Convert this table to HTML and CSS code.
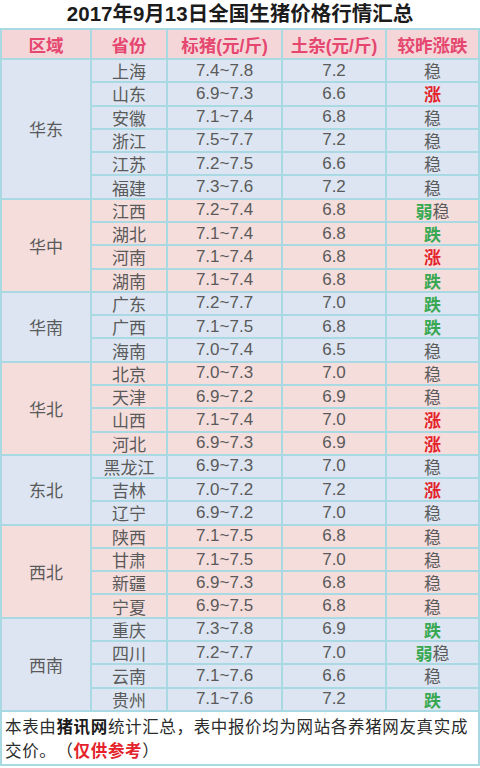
FILE: index.html
```html
<!DOCTYPE html>
<html lang="zh">
<head>
<meta charset="utf-8">
<link rel="stylesheet" href="styles.css">
</head>
<body>
<h1 class="title">2017年9月13日全国生猪价格行情汇总</h1>
<div class="sheet">
  <div class="h">区域</div><div class="h">省份</div><div class="h">标猪(元/斤)</div><div class="h">土杂(元/斤)</div><div class="h">较昨涨跌</div>

  <div class="grp blue">
    <div class="c region r6">华东</div>
    <div class="c">上海</div><div class="c">7.4~7.8</div><div class="c">7.2</div><div class="c">稳</div>
    <div class="c">山东</div><div class="c">6.9~7.3</div><div class="c">6.6</div><div class="c up">涨</div>
    <div class="c">安徽</div><div class="c">7.1~7.4</div><div class="c">6.8</div><div class="c">稳</div>
    <div class="c">浙江</div><div class="c">7.5~7.7</div><div class="c">7.2</div><div class="c">稳</div>
    <div class="c">江苏</div><div class="c">7.2~7.5</div><div class="c">6.6</div><div class="c">稳</div>
    <div class="c">福建</div><div class="c">7.3~7.6</div><div class="c">7.2</div><div class="c">稳</div>
  </div>

  <div class="grp pink">
    <div class="c region r4">华中</div>
    <div class="c">江西</div><div class="c">7.2~7.4</div><div class="c">6.8</div><div class="c"><span class="down">弱</span>稳</div>
    <div class="c">湖北</div><div class="c">7.1~7.4</div><div class="c">6.8</div><div class="c down">跌</div>
    <div class="c">河南</div><div class="c">7.1~7.4</div><div class="c">6.8</div><div class="c up">涨</div>
    <div class="c">湖南</div><div class="c">7.1~7.4</div><div class="c">6.8</div><div class="c down">跌</div>
  </div>

  <div class="grp blue">
    <div class="c region r3">华南</div>
    <div class="c">广东</div><div class="c">7.2~7.7</div><div class="c">7.0</div><div class="c down">跌</div>
    <div class="c">广西</div><div class="c">7.1~7.5</div><div class="c">6.8</div><div class="c down">跌</div>
    <div class="c">海南</div><div class="c">7.0~7.4</div><div class="c">6.5</div><div class="c">稳</div>
  </div>

  <div class="grp pink">
    <div class="c region r4">华北</div>
    <div class="c">北京</div><div class="c">7.0~7.3</div><div class="c">7.0</div><div class="c">稳</div>
    <div class="c">天津</div><div class="c">6.9~7.2</div><div class="c">6.9</div><div class="c">稳</div>
    <div class="c">山西</div><div class="c">7.1~7.4</div><div class="c">7.0</div><div class="c up">涨</div>
    <div class="c">河北</div><div class="c">6.9~7.3</div><div class="c">6.9</div><div class="c up">涨</div>
  </div>

  <div class="grp blue">
    <div class="c region r3">东北</div>
    <div class="c">黑龙江</div><div class="c">6.9~7.3</div><div class="c">7.0</div><div class="c">稳</div>
    <div class="c">吉林</div><div class="c">7.0~7.2</div><div class="c">7.2</div><div class="c up">涨</div>
    <div class="c">辽宁</div><div class="c">6.9~7.2</div><div class="c">7.0</div><div class="c">稳</div>
  </div>

  <div class="grp pink">
    <div class="c region r4">西北</div>
    <div class="c">陕西</div><div class="c">7.1~7.5</div><div class="c">6.8</div><div class="c">稳</div>
    <div class="c">甘肃</div><div class="c">7.1~7.5</div><div class="c">7.0</div><div class="c">稳</div>
    <div class="c">新疆</div><div class="c">6.9~7.3</div><div class="c">6.8</div><div class="c">稳</div>
    <div class="c">宁夏</div><div class="c">6.9~7.5</div><div class="c">6.8</div><div class="c">稳</div>
  </div>

  <div class="grp blue">
    <div class="c region r4">西南</div>
    <div class="c">重庆</div><div class="c">7.3~7.8</div><div class="c">6.9</div><div class="c down">跌</div>
    <div class="c">四川</div><div class="c">7.2~7.7</div><div class="c">7.0</div><div class="c"><span class="down">弱</span>稳</div>
    <div class="c">云南</div><div class="c">7.1~7.6</div><div class="c">6.6</div><div class="c">稳</div>
    <div class="c">贵州</div><div class="c">7.1~7.6</div><div class="c">7.2</div><div class="c down">跌</div>
  </div>

  <div class="foot">本表由<b>猪讯网</b>统计汇总，表中报价均为网站各养猪网友真实成<br>交价。（<b class="ref">仅供参考</b>）</div>
</div>
</body>
</html>
```
FILE: styles.css
```css
html, body {
  margin: 0;
  padding: 0;
  background: #ffffff;
}
body {
  width: 480px;
  height: 768px;
  overflow: hidden;
  font-family: "Liberation Sans", "Noto Sans CJK SC", sans-serif;
}
.title {
  margin: 0;
  height: 28px;
  line-height: 28px;
  font-size: 20.5px;
  font-weight: bold;
  color: #1c1c1c;
  text-align: center;
}
.sheet {
  display: grid;
  grid-template-columns: 88px 74px 113px 102px 91px;
  grid-template-rows: 28px repeat(28, 21.29px) 52px;
  gap: 2px;
  padding: 2px;
  background: #a9d9e3;
}
.h {
  background: #f4d6d9;
  color: #e5476f;
  font-weight: bold;
  font-size: 17.5px;
  display: flex;
  align-items: center;
  justify-content: center;
}
.grp {
  display: contents;
}
.c {
  display: flex;
  align-items: center;
  justify-content: center;
  font-size: 17px;
  color: #5a5a5a;
  white-space: nowrap;
}
.blue > .c { background: #dce5f1; }
.pink > .c { background: #f5dddc; }
.region { grid-column: 1; }
.r3 { grid-row: span 3; }
.r4 { grid-row: span 4; }
.r6 { grid-row: span 6; }
.up { color: #e4232b; font-weight: bold; }
.down { color: #38a852; font-weight: bold; }
.foot {
  grid-column: 1 / -1;
  background: #ffffff;
  font-family: "Noto Sans CJK SC", sans-serif;
  font-size: 16.5px;
  letter-spacing: 0.65px;
  line-height: 24px;
  color: #2b2b2b;
  text-spacing-trim: space-all;
  white-space: nowrap;
  padding: 2px 6px 2px 3px;
}
.foot b { font-weight: bold; color: #1a1a1a; }
.foot .ref { color: #e4232b; }
```
